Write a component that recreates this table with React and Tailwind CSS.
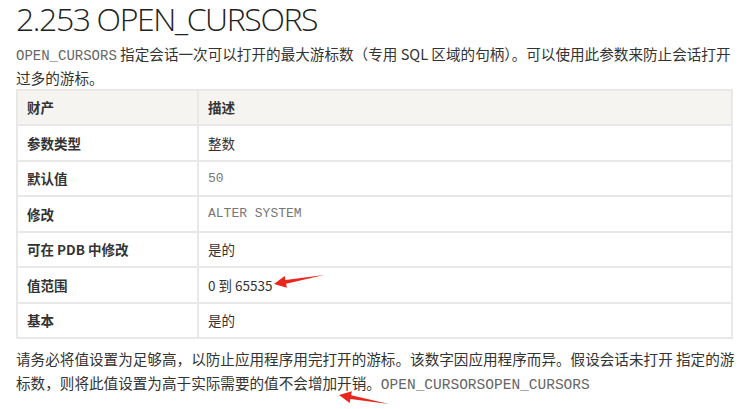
import React from "react";

const cjk = { fontFamily: '"Noto Sans CJK SC", "Noto Sans", sans-serif' };
const mono = { fontFamily: '"Liberation Mono", "Courier New", monospace' };

function Arrow({ x1, y1, x2, y2 }) {
  const dx = x2 - x1, dy = y2 - y1;
  const len = Math.hypot(dx, dy);
  const ux = dx / len, uy = dy / len;
  const px = -uy, py = ux;
  const headLen = 12, headW = 6, shaftW = 2;
  const bx = x2 - ux * headLen, by = y2 - uy * headLen;
  const pts = [
    [x1, y1],
    [bx + px * shaftW, by + py * shaftW],
    [bx + px * headW, by + py * headW],
    [x2, y2],
    [bx - px * headW, by - py * headW],
    [bx - px * shaftW, by - py * shaftW],
  ]
    .map((p) => p.join(","))
    .join(" ");
  return <polygon points={pts} fill="#e8261c" />;
}

const rows = [
  ["参数类型", "整数", "cjk"],
  ["默认值", "50", "mono"],
  ["修改", "ALTER SYSTEM", "mono"],
  ["可在 PDB 中修改", "是的", "cjk"],
  ["值范围", "0 到 65535", "cjk"],
  ["基本", "是的", "cjk"],
];

export default function App() {
  return (
    <div className="relative w-[750px] h-[409px] bg-white overflow-hidden text-[#333]" style={cjk}>
      <div className="px-4">
        <h1
          className="text-[32px] font-light leading-[44px] -my-[3px] tracking-[-1.4px] text-[#222]"
          style={{ fontFamily: '"Open Sans", "Noto Sans", sans-serif' }}
        >
          2.253 OPEN_CURSORS
        </h1>
        <p className="mt-[5px] text-[14.6px] leading-[21px] text-[#333] whitespace-nowrap">
          <span className="text-[#666] text-[14px]" style={mono}>OPEN_CURSORS</span> 指定会话一次可以打开的最大游标数（专用 SQL 区域的句柄）。可以使用此参数来防止会话打开
          <br />
          过多的游标。
        </p>
        <table className="mt-[1px] w-[717px] border-collapse text-[13.5px]">
          <thead>
            <tr className="bg-[#f5f4f0] h-[35px]">
              <th className="w-[181px] border-2 border-[#e8e8e6] text-left font-bold pl-[9px]">财产</th>
              <th className="border-2 border-[#e8e8e6] text-left font-bold pl-[9px]">描述</th>
            </tr>
          </thead>
          <tbody>
            {rows.map(([k, v, t]) => (
              <tr key={k} className="h-[35.5px]">
                <td className="border-2 border-[#e8e8e6] font-bold pl-[9px]">{k}</td>
                <td
                  className={
                    "border-2 border-[#e8e8e6] pl-[9px] " +
                    (t === "mono" ? "text-[#777] text-[13px]" : "text-[#333]")
                  }
                  style={t === "mono" ? mono : undefined}
                >
                  {v}
                </td>
              </tr>
            ))}
          </tbody>
        </table>
        <p className="mt-[8px] text-[14.6px] leading-[24px] text-[#333] whitespace-nowrap">
          请务必将值设置为足够高，以防止应用程序用完打开的游标。该数字因应用程序而异。假设会话未打开 指定的游
          <br />
          标数，则将此值设置为高于实际需要的值不会增加开销。
          <span className="text-[#666] text-[14.5px]" style={mono}>OPEN_CURSORSOPEN_CURSORS</span>
        </p>
      </div>
      <svg className="absolute left-0 top-0 pointer-events-none" width="750" height="409">
        <Arrow x1={324} y1={275} x2={274} y2={284} />
        <Arrow x1={389} y1={404} x2={339} y2={395} />
      </svg>
    </div>
  );
}
